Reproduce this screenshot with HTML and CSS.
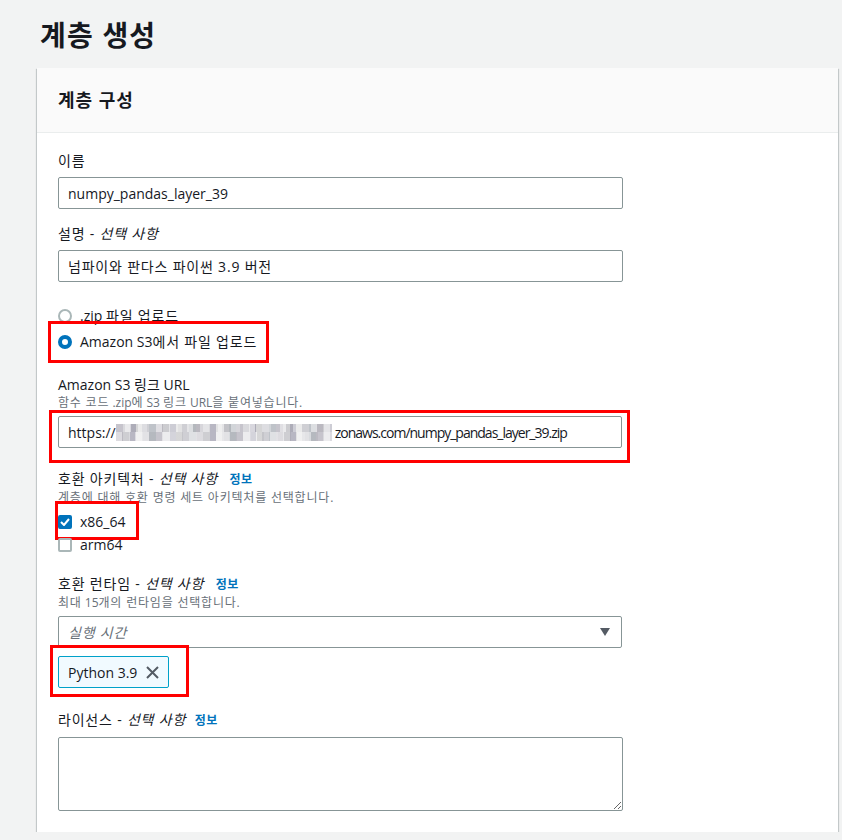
FILE: index.html
```html
<!DOCTYPE html>
<html lang="ko">
<head>
    <meta charset="UTF-8">
    <meta name="viewport" content="width=device-width, initial-scale=1.0">
    <title>계층 생성</title>
    <link rel="stylesheet" href="styles.css">
</head>
<body>
    <div class="page">
        <h1 class="title">계층 생성</h1>

        <div class="card">
            <div class="card-header">계층 구성</div>
            <div class="card-body">

                <div class="field">
                    <label class="label ko" for="name">이름</label>
                    <input class="input" type="text" id="name" value="numpy_pandas_layer_39">
                </div>

                <div class="field">
                    <label class="label ko" for="desc">설명 - <i>선택 사항</i></label>
                    <input class="input ko" type="text" id="desc" value="넘파이와 판다스 파이썬 3.9 버전">
                </div>

                <div class="radio-group">
                    <div class="radio-row">
                        <span class="radio"></span>
                        <span>.zip <span class="ko">파일 업로드</span></span>
                    </div>
                    <div class="radio-row mark mark-radio">
                        <span class="radio checked"></span>
                        <span>Amazon S3<span class="ko">에서 파일 업로드</span></span>
                    </div>
                </div>

                <div class="field field-url">
                    <div class="label">Amazon S3 링크 URL</div>
                    <div class="hint"><span class="ko">함수 코드</span> .zip<span class="ko">에</span> S3 <span class="ko">링크</span> URL<span class="ko">을 붙여넣습니다.</span></div>
                    <div class="mark mark-url">
                        <div class="input url-input">
                            <span>https://</span><span class="blur"></span><span class="url-tail">zonaws.com/numpy_pandas_layer_39.zip</span>
                        </div>
                    </div>
                </div>

                <div class="field field-arch">
                    <div class="label"><span class="ko">호환 아키텍처 - <i>선택 사항</i></span> <a class="info" href="#">정보</a></div>
                    <div class="hint ko">계층에 대해 호환 명령 세트 아키텍처를 선택합니다.</div>
                    <div class="checks">
                        <div class="mark mark-check">
                            <div class="check-row">
                                <span class="check checked">
                                    <svg width="10" height="8" viewBox="0 0 10 8"><path d="M1 4 L4 7 L9 1" fill="none" stroke="#fff" stroke-width="2"/></svg>
                                </span>
                                <span>x86_64</span>
                            </div>
                        </div>
                        <div class="check-row">
                            <span class="check"></span>
                            <span>arm64</span>
                        </div>
                    </div>
                </div>

                <div class="field field-runtime">
                    <div class="label"><span class="ko">호환 런타임 - <i>선택 사항</i></span> <a class="info" href="#">정보</a></div>
                    <div class="hint"><span class="ko">최대</span> 15<span class="ko">개의 런타임을 선택합니다.</span></div>
                    <div class="select">
                        <span class="placeholder ko">실행 시간</span>
                        <svg width="10" height="8" viewBox="0 0 10 8"><path d="M0 0 H10 L5 8 Z" fill="#545b64"/></svg>
                    </div>
                    <div class="mark mark-token">
                        <div class="token">
                            <span>Python 3.9</span>
                            <svg width="13" height="13" viewBox="0 0 13 13"><path d="M1 1 L12 12 M12 1 L1 12" stroke="#545b64" stroke-width="2"/></svg>
                        </div>
                    </div>
                </div>

                <div class="field field-license">
                    <label class="label" for="license"><span class="ko">라이선스 - <i>선택 사항</i></span> <a class="info info-near" href="#">정보</a></label>
                    <textarea class="textarea" id="license"></textarea>
                </div>

            </div>
        </div>
    </div>
</body>
</html>
```

FILE: styles.css
```css
body {
    margin: 0;
    padding: 0;
    background-color: #f2f3f3;
    font-family: "Open Sans", "Noto Sans CJK KR", sans-serif;
    font-size: 14px;
    color: #16191f;
}
.ko {
    letter-spacing: 0.8px;
}
.page {
    padding: 17px 4px 0 37px;
}
.title {
    margin: 0 0 15px 3px;
    font-size: 28px;
    line-height: 36px;
    font-weight: 700;
    letter-spacing: 1.2px;
}
.card {
    background-color: white;
    box-shadow: 0 1px 1px 0 rgba(0, 28, 36, 0.3), 1px 1px 1px 0 rgba(0, 28, 36, 0.15), -1px 1px 1px 0 rgba(0, 28, 36, 0.15);
}
.card-header {
    padding: 20px 21px;
    line-height: 24px;
    font-size: 18px;
    font-weight: 700;
    letter-spacing: 1px;
    background-color: #fafafa;
    border-bottom: 1px solid #eaeded;
}
.card-body {
    padding: 17px 21px 21px;
}
.field {
    margin-bottom: 14px;
}
.label {
    display: block;
    line-height: 22px;
    margin-bottom: 5px;
}
.label i {
    font-style: italic;
}
.hint {
    font-size: 12px;
    line-height: 16px;
    color: #687078;
    margin-top: -6px;
    margin-bottom: 5px;
}
.info {
    color: #0073bb;
    font-size: 12px;
    font-weight: 700;
    letter-spacing: 0.5px;
    text-decoration: none;
    margin-left: 8px;
}
.info-near {
    margin-left: 5px;
}
.input {
    display: block;
    box-sizing: border-box;
    width: 565px;
    height: 32px;
    padding: 0 9px;
    border: 1px solid #879596;
    border-radius: 2px;
    font-family: inherit;
    font-size: 14px;
    color: #16191f;
    background-color: white;
}
.url-input {
    display: flex;
    align-items: center;
    width: 564px;
    white-space: nowrap;
}
.url-tail {
    letter-spacing: -1px;
    margin-left: 3px;
}
.blur {
    display: inline-block;
    width: 216px;
    height: 17px;
    background:
        repeating-linear-gradient(90deg, rgba(255,255,255,0) 0 9px, rgba(255,255,255,0.45) 9px 15px, rgba(0,0,0,0.06) 15px 22px, rgba(255,255,255,0.3) 22px 31px) 0 0 / 100% 8px no-repeat,
        repeating-linear-gradient(90deg, rgba(255,255,255,0.4) 0 6px, rgba(0,0,0,0.05) 6px 13px, rgba(255,255,255,0) 13px 19px, rgba(255,255,255,0.5) 19px 27px) 0 8px / 100% 9px no-repeat,
        repeating-linear-gradient(90deg, #c6c4cc 0 7px, #d9d9dd 7px 14px, #b8b7c3 14px 20px, #e2e2e3 20px 26px, #cfcfd4 26px 33px, #bfc3c9 33px 40px);
}
.radio-group {
    margin-top: 23px;
    margin-bottom: 21px;
}
.radio-row {
    display: flex;
    align-items: center;
    gap: 8px;
    line-height: 22px;
    margin-bottom: 4px;
}
.radio {
    box-sizing: border-box;
    width: 14px;
    height: 14px;
    border-radius: 50%;
    border: 2px solid #aab7b8;
    background-color: white;
}
.radio.checked {
    border: 4px solid #0073bb;
}
.mark {
    outline: 3px solid #f00;
}
.mark-radio {
    width: fit-content;
    outline-offset: 7px;
    padding-right: 2px;
}
.mark-url {
    width: fit-content;
    margin: -3px -5px -12px -6px;
    padding: 3px 5px 12px 6px;
}
.field-url {
    margin-bottom: 20px;
}
.field-arch {
    margin-bottom: 17px;
}
.checks {
    display: flex;
    flex-direction: column;
    gap: 1px;
}
.mark-check {
    width: fit-content;
    margin: -7px 0 -4px 0;
    padding: 7px 11px 4px 0;
}
.check-row {
    display: flex;
    align-items: center;
    gap: 8px;
    line-height: 22px;
}
.check {
    box-sizing: border-box;
    width: 14px;
    height: 14px;
    border: 2px solid #aab7b8;
    border-radius: 2px;
    display: flex;
    align-items: center;
    justify-content: center;
}
.check.checked {
    background-color: #0073bb;
    border-color: #0073bb;
}
.select {
    box-sizing: border-box;
    width: 564px;
    height: 32px;
    padding: 0 11px 0 9px;
    border: 1px solid #879596;
    border-radius: 2px;
    display: flex;
    align-items: center;
    justify-content: space-between;
    margin-top: 5px;
}
.placeholder {
    font-style: italic;
    color: #687078;
}
.field-runtime {
    margin-bottom: 21px;
}
.mark-token {
    width: fit-content;
    margin: 0 0 -6px -5px;
    padding: 8px 17px 6px 5px;
}
.token {
    box-sizing: border-box;
    height: 32px;
    width: 111px;
    padding: 0 9px;
    display: flex;
    align-items: center;
    justify-content: space-between;
    background-color: #f1faff;
    border: 1px solid #00a1c9;
    border-radius: 2px;
}
.field-license {
    margin-bottom: 0;
}
.textarea {
    display: block;
    box-sizing: border-box;
    width: 565px;
    height: 74px;
    border: 1px solid #879596;
    border-radius: 2px;
    font-family: inherit;
}
```
